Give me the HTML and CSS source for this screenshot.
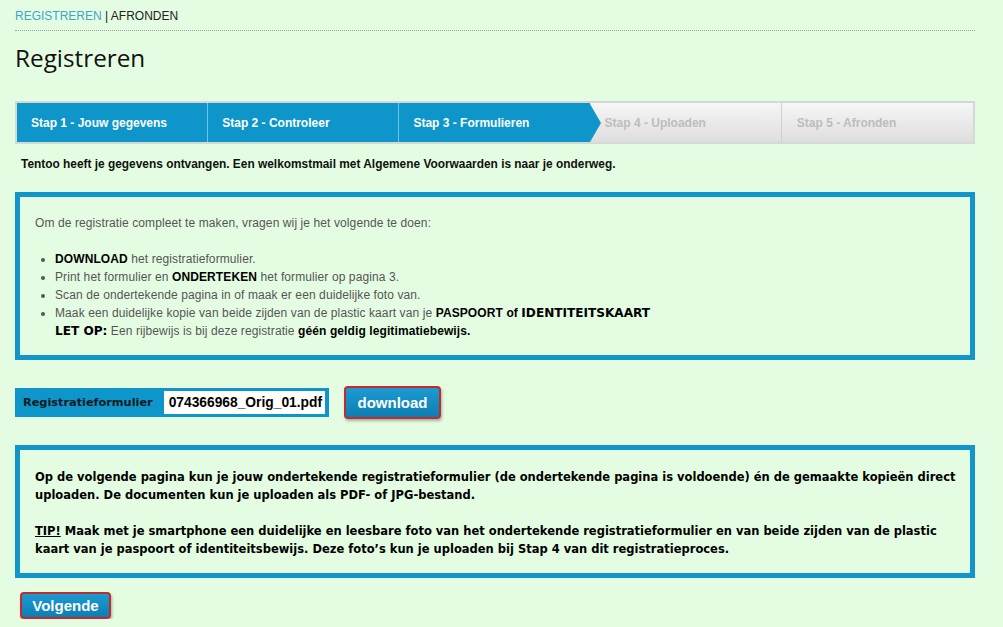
FILE: index.html
```html
<!DOCTYPE html>
<html lang="nl">
<head>
<meta charset="utf-8">
<title>Registreren</title>
<link rel="stylesheet" href="styles.css">
</head>
<body>
<div class="page">
  <div class="crumbs"><a class="crumb-link" href="#">REGISTREREN</a> | AFRONDEN</div>
  <h1 class="title">Registreren</h1>

  <div class="steps">
    <div class="step done">Stap 1 - Jouw gegevens</div>
    <div class="step done">Stap 2 - Controleer</div>
    <div class="step done current">Stap 3 - Formulieren</div>
    <div class="step todo">Stap 4 - Uploaden</div>
    <div class="step todo">Stap 5 - Afronden</div>
  </div>

  <p class="notice">Tentoo heeft je gegevens ontvangen. Een welkomstmail met Algemene Voorwaarden is naar je onderweg.</p>

  <div class="box info">
    <p class="intro">Om de registratie compleet te maken, vragen wij je het volgende te doen:</p>
    <ul class="todo-list">
      <li><b>DOWNLOAD</b> het registratieformulier.</li>
      <li>Print het formulier en <b>ONDERTEKEN</b> het formulier op pagina 3.</li>
      <li>Scan de ondertekende pagina in of maak er een duidelijke foto van.</li>
      <li>Maak een duidelijke kopie van beide zijden van de plastic kaart van je <b>PASPOORT</b> <b>of</b> <strong class="heavy">IDENTITEITSKAART</strong><br><strong class="heavy">LET OP:</strong> Een rijbewijs is bij deze registratie <b>géén geldig legitimatiebewijs.</b></li>
    </ul>
  </div>

  <div class="download-row">
    <div class="file-field">
      <span class="file-label">Registratieformulier</span>
      <span class="file-name">074366968_Orig_01.pdf</span>
    </div>
    <button class="btn btn-download">download</button>
  </div>

  <div class="box upload">
    <p>Op de volgende pagina kun je jouw ondertekende registratieformulier (de ondertekende pagina is voldoende) én de gemaakte kopieën direct uploaden. De documenten kun je uploaden als PDF- of JPG-bestand.</p>
    <p><span class="tip">TIP!</span> Maak met je smartphone een duidelijke en leesbare foto van het ondertekende registratieformulier en van beide zijden van de plastic kaart van je paspoort of identiteitsbewijs. Deze foto’s kun je uploaden bij Stap 4 van dit registratieproces.</p>
  </div>

  <button class="btn btn-next">Volgende</button>
</div>
</body>
</html>
```

FILE: styles.css
```css
html, body {
  margin: 0;
  padding: 0;
  background: #e4fde2;
}
body {
  font-family: "Liberation Sans", Arial, sans-serif;
  font-size: 12px;
  color: #111;
  overflow: hidden;
}
.page {
  padding: 8px 28px 0 15px;
}
.crumbs {
  font-size: 12px;
  line-height: 16px;
  color: #222;
  padding-bottom: 6px;
  border-bottom: 1px dotted #9aa59a;
}
.crumb-link {
  color: #3ea6cf;
  text-decoration: none;
}
.title {
  font-family: "Open Sans", "DejaVu Sans", sans-serif;
  font-weight: 400;
  font-size: 24.3px;
  line-height: 30px;
  color: #111;
  margin: 12px 0 28px 0;
}
.steps {
  display: flex;
  border: 2px solid #d3dad3;
  height: 39px;
  background: linear-gradient(#f6f6f6, #dedede);
}
.step {
  flex: 1 1 0;
  display: flex;
  align-items: center;
  padding-left: 14px;
  font-weight: bold;
  font-size: 12px;
  color: #bdbdbd;
  position: relative;
}
.step.done {
  background: #0e95ca;
  color: #fff;
}
.step.done + .step.done {
  border-left: 1px solid #6cc3e6;
}
.step.todo + .step.todo {
  border-left: 1px solid #d0d0d0;
}
.step.current::after {
  content: "";
  position: absolute;
  right: -11px;
  top: 1px;
  border-top: 19px solid transparent;
  border-bottom: 19px solid transparent;
  border-left: 11px solid #0e95ca;
  z-index: 1;
}
.step.todo {
  padding-left: 15px;
}
.notice {
  font-weight: bold;
  font-size: 11.9px;
  margin: 11px 0 19px 6px;
  line-height: 18px;
}
.box {
  border: 5px solid #1296c9;
}
.info {
  padding: 17px 15px 15px 15px;
  color: #555;
  line-height: 18px;
  letter-spacing: 0.1px;
}
.info b, .info strong {
  color: #000;
}
.info p {
  margin: 0 0 18px 0;
}
.todo-list {
  margin: 0;
  padding-left: 20px;
}
.heavy {
  font-family: "DejaVu Sans", sans-serif;
  font-weight: bold;
  font-size: 12.1px;
  letter-spacing: 0;
}
.download-row {
  display: flex;
  align-items: center;
  gap: 15px;
  margin: 26px 0 26px 0;
}
.file-field {
  display: flex;
  align-items: center;
  background: #0e95ca;
  padding: 3px 4px 3px 8px;
  gap: 11px;
}
.file-label {
  font-family: "DejaVu Sans", sans-serif;
  font-weight: bold;
  font-size: 11.3px;
  color: #0a1a22;
}
.file-name {
  background: #fff;
  font-weight: bold;
  font-size: 13.8px;
  padding: 4px 3px 4px 5px;
  line-height: 15px;
  color: #000;
}
.btn {
  font-family: "Liberation Sans", Arial, sans-serif;
  font-weight: bold;
  color: #fff;
  background: linear-gradient(#1d9ad0, #0b7fb4);
  border: 2px solid #c12a2e;
  border-radius: 4px;
  box-shadow: 1px 2px 3px rgba(0,0,0,0.3);
  cursor: pointer;
}
.btn-download {
  font-size: 15px;
  width: 97px;
  height: 33px;
}
.upload {
  padding: 18px 4px 15px 15px;
  font-family: "DejaVu Sans", sans-serif;
  font-weight: bold;
  font-size: 11.5px;
  line-height: 18px;
  color: #000;
}
.upload p {
  margin: 0 0 18px 0;
}
.upload p:last-child {
  margin-bottom: 0;
}
.tip {
  text-decoration: underline;
}
.btn-next {
  display: block;
  margin: 14px 0 0 5px;
  font-size: 15px;
  width: 91px;
  height: 27px;
  padding: 0;
}
```
